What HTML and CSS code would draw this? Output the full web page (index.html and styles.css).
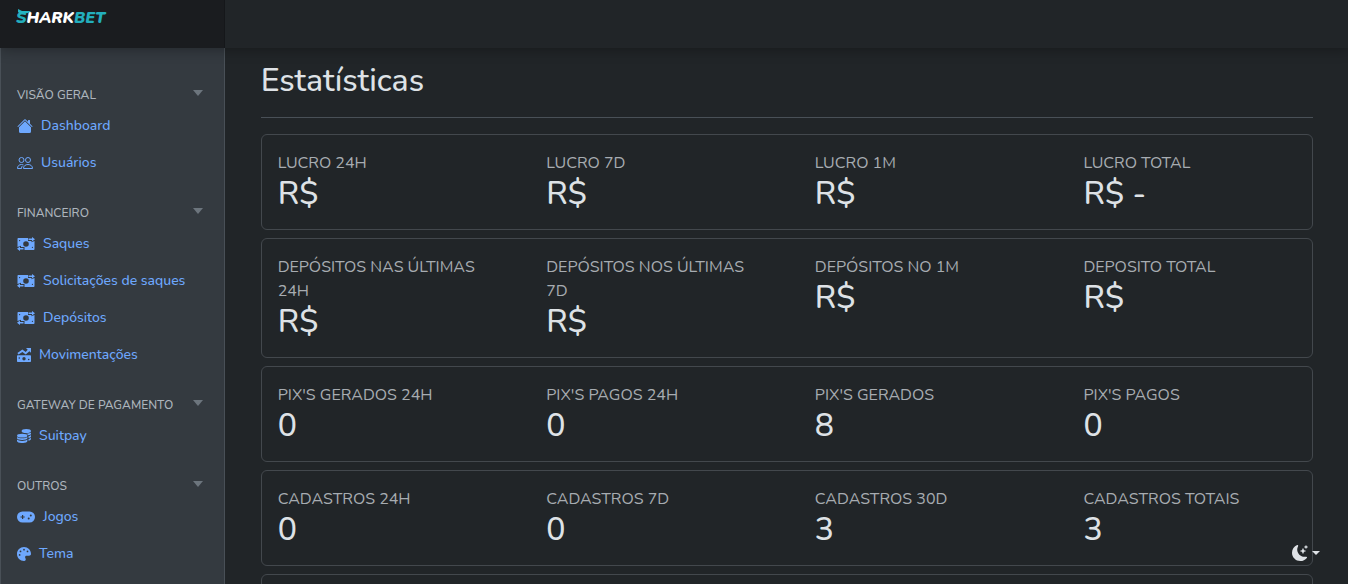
FILE: index.html
```html
<!DOCTYPE html>
<html lang="pt-BR">
<head>
    <meta charset="UTF-8">
    <meta name="viewport" content="width=device-width, initial-scale=1.0">
    <title>Estatísticas</title>
    <link rel="stylesheet" href="styles.css">
</head>
<body>
    <svg class="sprite" aria-hidden="true">
        <symbol id="bill" viewBox="0 0 18 14">
            <path fill-rule="evenodd" d="M1.500 1H11v2.900h3.500v1.400L17.500 4v8c0 .7-.5 1-1.200 1H7.500v-2.900H4V8.700L.5 10V2c0-.7.400-1 1-1zM9 4.200a2.800 2.800 0 1 0 0 5.600 2.800 2.800 0 0 0 0-5.600zM2 3v1.500L3.500 3zM16 11V9.500L14.500 11z"/>
            <path d="M15 0l3 2.200-3 2.200V3h-3.500V1.400H15zM3 9.600V11h3.500v1.600H3V14l-3-2.200z"/>
        </symbol>
    </svg>
    <div class="layout">
        <header>
            <a class="brand" href="#" aria-label="SHARKBET">
                <svg class="fin" width="14" height="5" viewBox="0 0 14 5"><path d="M1 0l4 2 9 0-3 2-8 1-2-2z"/></svg>
                <span class="teal">S</span>HARK<span class="teal">BET</span>
            </a>
        </header>

        <nav class="sidebar">
            <section>
                <h6>Visão geral <span class="caret"></span></h6>
                <a href="#">
                    <svg width="16" height="16" viewBox="0 0 16 16"><path d="M8.707 1.500a1 1 0 0 0-1.414 0L.646 8.146a.5.5 0 0 0 .708.708L8 2.207l6.646 6.647a.5.5 0 0 0 .708-.708L13 5.793V2.500a.5.5 0 0 0-.5-.5h-1a.5.5 0 0 0-.5.5v1.293z"/><path d="m8 3.293 6 6V13.500a1.500 1.500 0 0 1-1.500 1.500h-9A1.500 1.500 0 0 1 2 13.500V9.293z"/></svg>
                    Dashboard
                </a>
                <a href="#">
                    <svg class="line" width="16" height="16" viewBox="0 0 16 16"><circle cx="4.500" cy="5" r="2.500"/><circle cx="11" cy="5" r="2.500"/><path d="M6.500 13.500C6.500 11 8.300 9.500 11 9.500s4.500 1.500 4.500 4zM4.500 13.500h-4c0-2.500 1.500-4 4-4 .8 0 1.400.1 2 .4M4.500 13.500c0-1.200.3-2 .9-2.700"/></svg>
                    Usuários
                </a>
            </section>
            <section>
                <h6>Financeiro <span class="caret"></span></h6>
                <a href="#"><svg width="18" height="14"><use href="#bill"/></svg> Saques</a>
                <a href="#"><svg width="18" height="14"><use href="#bill"/></svg> Solicitações de saques</a>
                <a href="#"><svg width="18" height="14"><use href="#bill"/></svg> Depósitos</a>
                <a href="#">
                    <svg width="14" height="14" viewBox="0 0 14 14"><path d="M9 0h5v4.800l-1.600-1.500L8.700 6.600 5.400 4 1.500 6.500.4 4.900l5-3.500 3.300 2.500 2-2.200z"/><path fill-rule="evenodd" d="M1 7.300h12c.6 0 1 .4 1 1V13c0 .6-.4 1-1 1H1c-.6 0-1-.4-1-1V8.300c0-.6.4-1 1-1zm6 1.700a1.700 1.700 0 1 0 0 3.400A1.700 1.700 0 0 0 7 9zM1.500 10a.8.8 0 1 0 1.600 0 .8.8 0 0 0-1.600 0zm9.400 1.500a.8.8 0 1 0 1.600 0 .8.8 0 0 0-1.600 0z"/></svg>
                    Movimentações
                </a>
            </section>
            <section>
                <h6>Gateway de pagamento <span class="caret"></span></h6>
                <a href="#">
                    <svg width="14" height="14" viewBox="0 0 14 14"><ellipse cx="9.300" cy="2" rx="4.700" ry="2"/><path d="M14 3.500v1.200c0 .7-1 1.300-2.600 1.600-.5-.8-1.700-1.400-3.200-1.700 2.600.2 4.800-.2 5.800-1.100zM14 6v1.500c0 .7-1 1.300-2.500 1.600V7.300c1.100-.3 2-.7 2.500-1.300zM14 8.800v1.300c0 .7-1 1.400-2.500 1.700V10c1.100-.2 2-.6 2.500-1.200z"/><ellipse cx="5.200" cy="6.700" rx="5.200" ry="1.900"/><path d="M0 8c1.200 1.800 9.200 1.800 10.400 0v1.300c0 2.200-10.400 2.200-10.400 0zM0 10.600c1.200 1.800 9.200 1.800 10.400 0v1.400c0 2.700-10.400 2.700-10.400 0z"/></svg>
                    Suitpay
                </a>
            </section>
            <section>
                <h6>Outros <span class="caret"></span></h6>
                <a href="#">
                    <svg width="18" height="12" viewBox="0 0 18 12"><path fill-rule="evenodd" d="M5.500.5h7a5.500 5.500 0 0 1 0 11h-7a5.500 5.500 0 0 1 0-11zM5 3.900V5.400H3.500v1.200H5v1.500h1.200V6.600h1.500V5.400H6.200V3.900zM11.700 6.500a1 1 0 1 0 0 2 1 1 0 0 0 0-2zM13.800 3.500a1 1 0 1 0 0 2 1 1 0 0 0 0-2z"/></svg>
                    Jogos
                </a>
                <a href="#">
                    <svg width="14" height="14" viewBox="0 0 512 512"><path d="M512 256c0 .9 0 1.800 0 2.700c-.4 36.500-33.600 61.300-70.100 61.300H344c-26.500 0-48 21.500-48 48c0 3.400 .4 6.700 1 9.900c2.100 10.200 6.500 20 10.800 29.900c6.100 13.800 12.100 27.500 12.100 42c0 31.800-21.600 60.700-53.400 62c-3.500 .1-7 .2-10.600 .2C114.600 512 0 397.400 0 256S114.600 0 256 0S512 114.600 512 256zM128 288a32 32 0 1 0 -64 0 32 32 0 1 0 64 0zm0-96a32 32 0 1 0 0-64 32 32 0 1 0 0 64zM288 96a32 32 0 1 0 -64 0 32 32 0 1 0 64 0zm96 96a32 32 0 1 0 0-64 32 32 0 1 0 0 64z"/></svg>
                    Tema
                </a>
            </section>
        </nav>

        <main>
            <h1>Estatísticas</h1>
            <div class="card">
                <div><p>LUCRO 24H</p><strong>R$</strong></div>
                <div><p>LUCRO 7D</p><strong>R$</strong></div>
                <div><p>LUCRO 1M</p><strong>R$</strong></div>
                <div><p>LUCRO TOTAL</p><strong>R$ -</strong></div>
            </div>
            <div class="card">
                <div><p>DEPÓSITOS NAS ÚLTIMAS 24H</p><strong>R$</strong></div>
                <div><p>DEPÓSITOS NOS ÚLTIMAS 7D</p><strong>R$</strong></div>
                <div><p>DEPÓSITOS NO 1M</p><strong>R$</strong></div>
                <div><p>DEPOSITO TOTAL</p><strong>R$</strong></div>
            </div>
            <div class="card">
                <div><p>PIX'S GERADOS 24H</p><strong>0</strong></div>
                <div><p>PIX'S PAGOS 24H</p><strong>0</strong></div>
                <div><p>PIX'S GERADOS</p><strong>8</strong></div>
                <div><p>PIX'S PAGOS</p><strong>0</strong></div>
            </div>
            <div class="card">
                <div><p>CADASTROS 24H</p><strong>0</strong></div>
                <div><p>CADASTROS 7D</p><strong>0</strong></div>
                <div><p>CADASTROS 30D</p><strong>3</strong></div>
                <div><p>CADASTROS TOTAIS</p><strong>3</strong></div>
            </div>
            <div class="card"></div>
        </main>
    </div>

    <button class="theme-toggle" type="button" aria-label="Alternar tema">
        <svg width="16" height="16" viewBox="0 0 16 16"><path d="M6 .278a.77.77 0 0 1 .08.858 7.200 7.200 0 0 0-.878 3.460c0 4.021 3.278 7.277 7.318 7.277q.792-.001 1.533-.16a.79.79 0 0 1 .81.316.73.73 0 0 1-.031.893A8.350 8.350 0 0 1 8.344 16C3.734 16 0 12.286 0 7.710 0 4.266 2.114 1.312 5.124.06A.75.75 0 0 1 6 .278"/><path d="M10.794 3.148a.217.217 0 0 1 .412 0l.387 1.162c.173.518.579.924 1.097 1.097l1.162.387a.217.217 0 0 1 0 .412l-1.162.387a1.730 1.730 0 0 0-1.097 1.097l-.387 1.162a.217.217 0 0 1-.412 0l-.387-1.162A1.730 1.730 0 0 0 9.310 6.593l-1.162-.387a.217.217 0 0 1 0-.412l1.162-.387a1.730 1.730 0 0 0 1.097-1.097zM13.863.099a.145.145 0 0 1 .274 0l.258.774c.115.346.386.617.732.732l.774.258a.145.145 0 0 1 0 .274l-.774.258a1.160 1.160 0 0 0-.732.732l-.258.774a.145.145 0 0 1-.274 0l-.258-.774a1.160 1.160 0 0 0-.732-.732l-.774-.258a.145.145 0 0 1 0-.274l.774-.258c.346-.115.617-.386.732-.732z"/></svg>
        <span class="caret"></span>
    </button>
</body>
</html>
```

FILE: styles.css
```css
* { box-sizing: border-box; }
body {
    margin: 0;
    background: #212528;
    color: #dee2e6;
    font-family: Nunito, "Noto Sans", sans-serif;
    font-size: 16px;
    line-height: 24px;
}
svg { fill: currentColor; flex: none; }
.sprite { display: none; }

.layout {
    display: grid;
    grid-template-columns: 1fr 5fr;
    grid-template-rows: 48px 1fr;
    height: 100vh;
    overflow: hidden;
}
header { grid-column: 1 / -1; display: grid; grid-template-columns: 1fr 5fr; box-shadow: 0 2px 12px rgba(0, 0, 0, 0.3); z-index: 1; }
.brand {
    position: relative;
    padding: 6px 16px;
    background: #1a1c1f;
    border-right: 1px solid #15171a;
    color: #fff;
    font: italic 900 16px/24px Nunito, "Open Sans", sans-serif;
    text-decoration: none;
}
.teal { color: #23aebc; }
.fin { position: absolute; left: 17px; top: 9px; fill: #25b5c4; }

.sidebar { background: #343a40; border: solid #495057; border-width: 0 1px; padding-top: 24px; overflow: hidden; }
.sidebar section { padding: 13px 16px 9px; }
.sidebar h6 {
    display: flex;
    justify-content: space-between;
    margin: 0;
    padding: 0 5px 2px 0;
    color: #adb5bd;
    font-size: 12px;
    font-weight: 500;
    line-height: 20px;
    text-transform: uppercase;
}
.sidebar a {
    display: flex;
    align-items: center;
    gap: 8px;
    height: 37px;
    color: #6ea8fe;
    font-size: 14px;
    font-weight: 500;
    text-decoration: none;
}
.line { fill: none; stroke: currentColor; }
.caret { border: solid transparent; border-width: 6px 5px 0; border-top-color: #6c757d; height: 0; }
h6 .caret { margin-top: 5px; }

main { padding: 13px 35px 0 36px; overflow: hidden; }
h1 { margin: 0 0 16px; padding-bottom: 16px; border-bottom: 1px solid #495057; font-size: 32px; font-weight: 500; line-height: 40px; }
.card {
    display: grid;
    grid-template-columns: repeat(4, 1fr);
    column-gap: 56px;
    padding: 16px;
    margin-bottom: 8px;
    border: 1px solid #43484d;
    border-radius: 6px;
}
.card p { margin: 0; color: #a7acb1; }
.card strong { display: block; font-size: 32px; font-weight: 500; line-height: 38px; }

.theme-toggle {
    position: fixed;
    right: 28px;
    bottom: 23px;
    display: flex;
    align-items: center;
    gap: 4px;
    padding: 0;
    border: 0;
    background: none;
    color: #dee2e6;
    z-index: 2;
}
.theme-toggle .caret { border-width: 4px 4px 0; border-top-color: #dee2e6; }
```
